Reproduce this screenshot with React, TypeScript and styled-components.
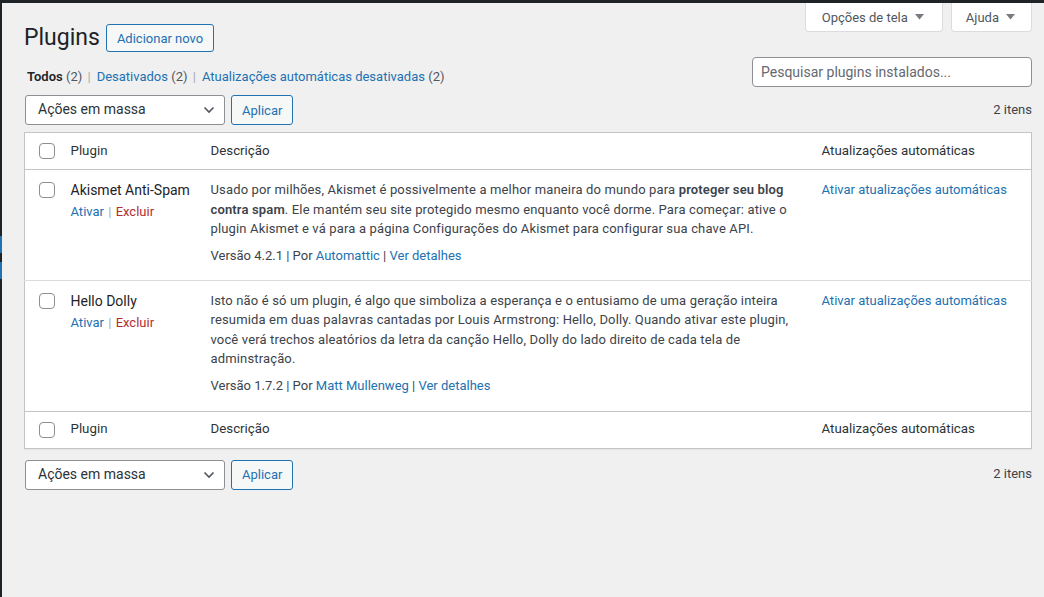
import React from 'react'
import styled, { createGlobalStyle } from 'styled-components'

const GlobalStyle = createGlobalStyle`
  html, body {
    margin: 0;
    padding: 0;
    background: #f0f0f1;
  }
  body {
    font-family: "Segoe UI", Roboto, "Liberation Sans", sans-serif;
    font-size: 13px;
    line-height: 1.4;
    color: #3c434a;
  }
  * { box-sizing: border-box; }
`

const Page = styled.div`
  min-height: 100vh;
  display: flex;
  flex-direction: column;
`

const AdminBar = styled.div`
  height: 3px;
  background: #1d2327;
  flex-shrink: 0;
`

const Body = styled.div`
  flex: 1;
  display: flex;
`

const MenuEdge = styled.div`
  width: 2px;
  background: #1d2327;
  display: flex;
  flex-direction: column;
  gap: 9px;
  padding-top: 233px;
`

const MenuMark = styled.div`
  height: 17px;
  background: #2271b1;
`

const Content = styled.main`
  flex: 1;
  padding: 0 12px 0 22px;
`

const TopRow = styled.div`
  display: flex;
  justify-content: space-between;
  align-items: flex-start;
`

const TitleGroup = styled.div`
  display: flex;
  align-items: center;
  gap: 6px;
  padding-top: 21px;
`

const Title = styled.h1`
  margin: 0;
  font-size: 23px;
  font-weight: 400;
  line-height: 28px;
  color: #1d2327;
`

const OutlineButton = styled.button<{ $h?: number }>`
  font-family: inherit;
  font-size: 13px;
  height: ${(p) => p.$h ?? 28}px;
  padding: 0 10px;
  border: 1px solid #2271b1;
  border-radius: 3px;
  background: #f6f7f7;
  color: #2271b1;
  cursor: pointer;
`

const ScreenTabs = styled.div`
  display: flex;
  gap: 8px;
`

const ScreenTab = styled.button<{ $pad: number }>`
  font-family: inherit;
  font-size: 13px;
  color: #50575e;
  height: 29px;
  padding: 0 ${(p) => p.$pad + 2}px 0 ${(p) => p.$pad}px;
  background: #fff;
  border: 1px solid #dcdcde;
  border-top: none;
  border-radius: 0 0 4px 4px;
  display: flex;
  align-items: center;
  gap: 7px;
`

const FilterRow = styled.div`
  display: flex;
  justify-content: space-between;
  align-items: flex-end;
  margin-top: 5px;
`

const Views = styled.ul`
  list-style: none;
  margin: 0 0 0 3px;
  padding: 0;
  display: flex;
  line-height: 20px;
  color: #50575e;
`

const ViewItem = styled.li`
  white-space: pre;
`

const ViewLink = styled.a<{ $current?: boolean }>`
  color: ${(p) => (p.$current ? '#1d2327' : '#2271b1')};
  font-weight: ${(p) => (p.$current ? 600 : 400)};
  text-decoration: none;
`

const Sep = styled.span`
  color: #a7aaad;
  margin: 0 6px 0 2px;
`

const Search = styled.input`
  width: 280px;
  height: 30px;
  font-family: inherit;
  font-size: 14px;
  padding: 0 8px;
  border: 1px solid #8c8f94;
  border-radius: 4px;
  background: #fff;
  color: #2c3338;
  &::placeholder { color: #646970; }
`

const TableNav = styled.div<{ $top?: boolean }>`
  display: flex;
  align-items: center;
  margin: ${(p) => (p.$top ? '8px 0 7px' : '11px 0 0')};
`

const BulkSelect = styled.div`
  width: 200px;
  height: 30px;
  margin-left: 1px;
  border: 1px solid #8c8f94;
  border-radius: 3px;
  background: #fff;
  color: #2c3338;
  font-size: 14px;
  display: flex;
  align-items: center;
  justify-content: space-between;
  padding: 0 9px 0 12px;
`

const Count = styled.div`
  margin-left: auto;
  color: #3c434a;
`

const Actions = styled.div`
  display: flex;
  gap: 6px;
  align-items: center;
`

const Table = styled.table`
  width: 100%;
  table-layout: fixed;
  border-collapse: collapse;
  background: #fff;
  border: 1px solid #c3c4c7;
  box-shadow: 0 1px 1px rgba(0, 0, 0, 0.04);
`

const HeadRow = styled.tr<{ $foot?: boolean }>`
  height: 37px;
  & > * {
    ${(p) => (p.$foot ? 'border-top: 1px solid #c3c4c7;' : 'border-bottom: 1px solid #c3c4c7;')}
  }
`

const HeadCell = styled.th`
  text-align: left;
  font-weight: 400;
  font-size: 13.3px;
  color: #2c3338;
  padding: 0 10px;
  vertical-align: middle;
`

const CheckCell = styled.td<{ $head?: boolean }>`
  padding: ${(p) => (p.$head ? '0 0 0 14px' : '12px 0 0 14px')};
  vertical-align: ${(p) => (p.$head ? 'middle' : 'top')};
`

const Row = styled.tr`
  & > td { border-bottom: 1px solid #dcdcde; }
  &:last-child > td { border-bottom: none; padding-bottom: 15px; }
`

const Cell = styled.td`
  padding: 10px 10px 14px;
  vertical-align: top;
`

const Box = styled.span`
  display: block;
  width: 16px;
  height: 16px;
  border: 1px solid #8c8f94;
  border-radius: 4px;
  background: #fff;
`

const PluginName = styled.div`
  font-size: 14px;
  line-height: 20px;
  color: #1d2327;
`

const RowActions = styled.div`
  margin-top: 2px;
  line-height: 20px;
  color: #a7aaad;
`

const ActionSep = styled.span`
  margin: 0 1px;
`

const Link = styled.a<{ $danger?: boolean }>`
  color: ${(p) => (p.$danger ? '#b32d2e' : '#2271b1')};
  text-decoration: none;
`

const Desc = styled.p`
  margin: 0;
  line-height: 19.5px;
  letter-spacing: 0.15px;
  color: #3c434a;
  strong { font-weight: 600; }
`

const Meta = styled.div`
  margin-top: 7.5px;
  line-height: 19.5px;
  color: #3c434a;
`

const AutoLink = styled(Link)`
  display: block;
  line-height: 20px;
`

const Caret = () => (
  <svg width="9" height="6" viewBox="0 0 9 6">
    <polygon points="0,0 9,0 4.5,5.5" fill="#787c82" />
  </svg>
)

const Chevron = () => (
  <svg width="12" height="8" viewBox="0 0 12 8">
    <path d="M1.5 1.5 L6 6 L10.5 1.5" fill="none" stroke="#50575e" strokeWidth="1.6" />
  </svg>
)

const BulkBar = ({ top }: { top?: boolean }) => (
  <TableNav $top={top}>
    <Actions>
      <BulkSelect>
        <span>Ações em massa</span>
        <Chevron />
      </BulkSelect>
      <OutlineButton $h={30}>Aplicar</OutlineButton>
    </Actions>
    <Count>2 itens</Count>
  </TableNav>
)

const plugins = [
  {
    name: 'Akismet Anti-Spam',
    version: '4.2.1',
    author: 'Automattic',
    desc: (
      <>
        Usado por milhões, Akismet é possivelmente a melhor maneira do mundo para{' '}
        <strong>proteger seu blog contra spam</strong>. Ele mantém seu site protegido mesmo enquanto
        você dorme. Para começar: ative o plugin Akismet e vá para a página Configurações do Akismet
        para configurar sua chave API.
      </>
    ),
  },
  {
    name: 'Hello Dolly',
    version: '1.7.2',
    author: 'Matt Mullenweg',
    desc: (
      <>
        Isto não é só um plugin, é algo que simboliza a esperança e o entusiamo de uma geração inteira
        resumida em duas palavras cantadas por Louis Armstrong: Hello, Dolly. Quando ativar este
        plugin, você verá trechos aleatórios da letra da canção Hello, Dolly do lado direito de cada
        tela de adminstração.
      </>
    ),
  },
]

const HeaderRow = ({ foot }: { foot?: boolean }) => (
  <HeadRow $foot={foot}>
    <CheckCell $head>
      <Box />
    </CheckCell>
    <HeadCell>Plugin</HeadCell>
    <HeadCell>Descrição</HeadCell>
    <HeadCell>Atualizações automáticas</HeadCell>
  </HeadRow>
)

const App = (): JSX.Element => {
  return (
    <Page>
      <GlobalStyle />
      <AdminBar />
      <Body>
        <MenuEdge>
          <MenuMark />
          <MenuMark />
        </MenuEdge>
        <Content>
          <TopRow>
            <TitleGroup>
              <Title>Plugins</Title>
              <OutlineButton>Adicionar novo</OutlineButton>
            </TitleGroup>
            <ScreenTabs>
              <ScreenTab $pad={16}>
                Opções de tela <Caret />
              </ScreenTab>
              <ScreenTab $pad={14}>
                Ajuda <Caret />
              </ScreenTab>
            </ScreenTabs>
          </TopRow>

          <FilterRow>
            <Views>
              <ViewItem>
                <ViewLink $current>Todos</ViewLink> (2) <Sep>|</Sep>
              </ViewItem>
              <ViewItem>
                <ViewLink>Desativados</ViewLink> (2) <Sep>|</Sep>
              </ViewItem>
              <ViewItem>
                <ViewLink>Atualizações automáticas desativadas</ViewLink> (2)
              </ViewItem>
            </Views>
            <Search placeholder="Pesquisar plugins instalados..." />
          </FilterRow>

          <BulkBar top />

          <Table>
            <colgroup>
              <col style={{ width: 36 }} />
              <col style={{ width: 140 }} />
              <col style={{ width: 611 }} />
              <col />
            </colgroup>
            <thead>
              <HeaderRow />
            </thead>
            <tbody>
              {plugins.map((p) => (
                <Row key={p.name}>
                  <CheckCell>
                    <Box />
                  </CheckCell>
                  <Cell>
                    <PluginName>{p.name}</PluginName>
                    <RowActions>
                      <Link>Ativar</Link> <ActionSep>|</ActionSep> <Link $danger>Excluir</Link>
                    </RowActions>
                  </Cell>
                  <Cell>
                    <Desc>{p.desc}</Desc>
                    <Meta>
                      Versão {p.version} | Por <Link>{p.author}</Link> | <Link>Ver detalhes</Link>
                    </Meta>
                  </Cell>
                  <Cell>
                    <AutoLink>Ativar atualizações automáticas</AutoLink>
                  </Cell>
                </Row>
              ))}
            </tbody>
            <tfoot>
              <HeaderRow foot />
            </tfoot>
          </Table>

          <BulkBar />
        </Content>
      </Body>
    </Page>
  )
}

export default App
